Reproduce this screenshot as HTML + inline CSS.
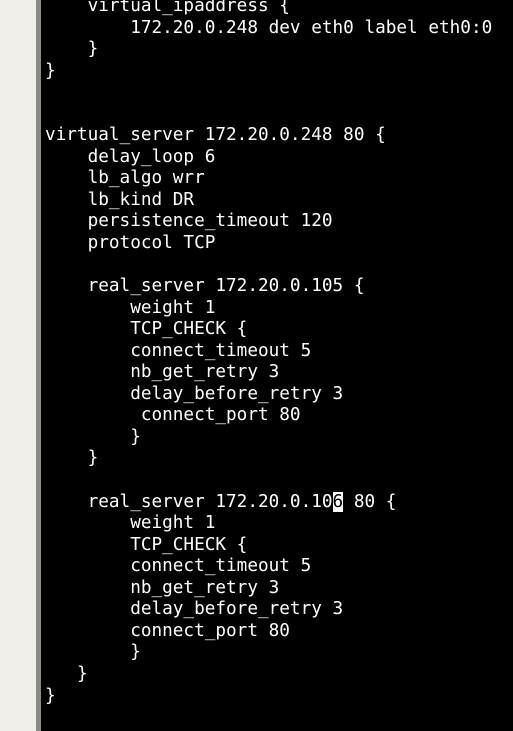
<!DOCTYPE html>
<html><head><style>
html,body{margin:0;padding:0;width:513px;height:731px;overflow:hidden;background:#000}
.side{position:absolute;left:0;top:0;width:36px;height:731px;background:#f2efea}
.bd{position:absolute;left:36px;top:0;width:5px;height:731px;background:#8a8a8a}
pre{position:absolute;left:45px;top:-4px;margin:0;color:#fff;font-family:"DejaVu Sans Mono","Liberation Mono",monospace;font-size:17.7px;line-height:21.55px}
.c{background:#fff;color:#000}
</style></head><body>
<div class="side"></div><div class="bd"></div>
<pre>    virtual_ipaddress {
        172.20.0.248 dev eth0 label eth0:0
    }
}


virtual_server 172.20.0.248 80 {
    delay_loop 6
    lb_algo wrr
    lb_kind DR
    persistence_timeout 120
    protocol TCP

    real_server 172.20.0.105 {
        weight 1
        TCP_CHECK {
        connect_timeout 5
        nb_get_retry 3
        delay_before_retry 3
         connect_port 80
        }
    }

    real_server 172.20.0.10<span class="c">6</span> 80 {
        weight 1
        TCP_CHECK {
        connect_timeout 5
        nb_get_retry 3
        delay_before_retry 3
        connect_port 80
        }
   }
}</pre>
</body></html>
